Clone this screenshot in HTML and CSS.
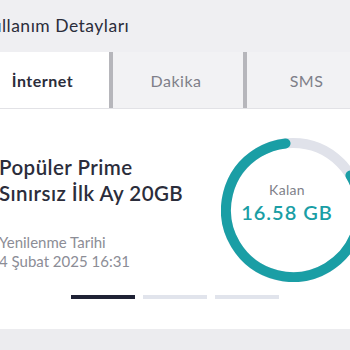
FILE: index.html
```
<!DOCTYPE html>
<html lang="tr">
<head>
    <meta charset="UTF-8">
    <meta name="viewport" content="width=device-width, initial-scale=1.0">
    <title>Kullanım Detayları</title>
    <link rel="stylesheet" href="styles.css">
</head>
<body>
    <div class="page">
        <h1 class="page-title">Kullanım Detayları</h1>

        <nav class="tabs">
            <a href="#" class="tab active">İnternet</a>
            <a href="#" class="tab">Dakika</a>
            <a href="#" class="tab">SMS</a>
        </nav>

        <section class="usage-card">
            <div class="usage-row">
                <div class="package">
                    <h2>Popüler Prime<br>Sınırsız İlk Ay 20GB</h2>
                    <p class="renew-label">Yenilenme Tarihi</p>
                    <p class="renew-date">4 Şubat 2025 16:31</p>
                </div>
                <div class="gauge">
                    <svg width="144" height="144" viewBox="0 0 144 144">
                        <circle cx="72" cy="72" r="67" fill="none" stroke="#e0e2ea" stroke-width="10"/>
                        <circle cx="72" cy="72" r="67" fill="none" stroke="#1a9ea5" stroke-width="10"
                                stroke-linecap="round" stroke-dasharray="344 500"
                                transform="rotate(-31 72 72)"/>
                    </svg>
                    <div class="gauge-text">
                        <span class="gauge-label">Kalan</span>
                        <span class="gauge-value">16.58 GB</span>
                    </div>
                </div>
            </div>
            <div class="pager">
                <span class="dot active"></span>
                <span class="dot"></span>
                <span class="dot"></span>
            </div>
        </section>
    </div>
</body>
</html>
```

FILE: styles.css
```
body, html {
    margin: 0;
    font-family: 'Lato', 'Noto Sans', sans-serif;
    background-color: #ececef;
    color: #2b2d3b;
    overflow: hidden;
}

.page {
    width: 390px;
    margin-left: -20px;
}

.page-title {
    margin: 0;
    height: 52px;
    line-height: 51px;
    font-size: 17.5px;
    font-weight: 400;
    letter-spacing: 0.5px;
    background: #efeff2;
}

.tabs {
    display: flex;
    height: 56px;
    border-bottom: 1px solid #e2e2e6;
}

.tab {
    box-sizing: border-box;
    display: flex;
    align-items: center;
    justify-content: center;
    padding-right: 4px;
    text-decoration: none;
    font-size: 16px;
    letter-spacing: 0.5px;
    color: #7e7f89;
    background: #f2f2f4;
    border-left: 4px solid #b6b6bb;
}

.tab:nth-child(1) {
    flex: 0 0 129px;
    border-left: none;
}

.tab:nth-child(2) {
    flex: 0 0 134px;
}

.tab:nth-child(3) {
    flex: 1;
}

.tab.active {
    background: #fff;
    color: #2b2d3b;
    font-weight: 700;
}

.usage-card {
    background: #fff;
    padding: 28px 0 30px 19px;
}

.usage-row {
    display: flex;
    justify-content: space-between;
}

.package {
    padding-top: 17px;
}

.package h2 {
    margin: 0 0 27px;
    font-size: 20.5px;
    line-height: 26px;
    font-weight: 600;
    letter-spacing: 0.45px;
}

.package p {
    margin: 0;
    font-size: 15px;
    line-height: 19px;
    color: #8c8d96;
}

.gauge {
    position: relative;
    width: 144px;
    height: 144px;
    margin-top: 0.5px;
    margin-right: 5px;
}

.gauge svg {
    display: block;
}

.gauge-text {
    position: absolute;
    inset: 0;
    display: flex;
    flex-direction: column;
    align-items: center;
    padding: 42px 12px 0 0;
}

.gauge-label {
    font-size: 14px;
    line-height: 20px;
    color: #7e7f89;
    letter-spacing: 0.3px;
}

.gauge-value {
    font-size: 20px;
    line-height: 24px;
    font-weight: 600;
    letter-spacing: 1px;
    color: #1a9ea5;
}

.pager {
    display: flex;
    justify-content: center;
    gap: 8px;
    margin-top: 13px;
    padding-right: 19px;
}

.dot {
    width: 64px;
    height: 4px;
    background: #e1e4ec;
}

.dot.active {
    background: #1f2235;
}
```
